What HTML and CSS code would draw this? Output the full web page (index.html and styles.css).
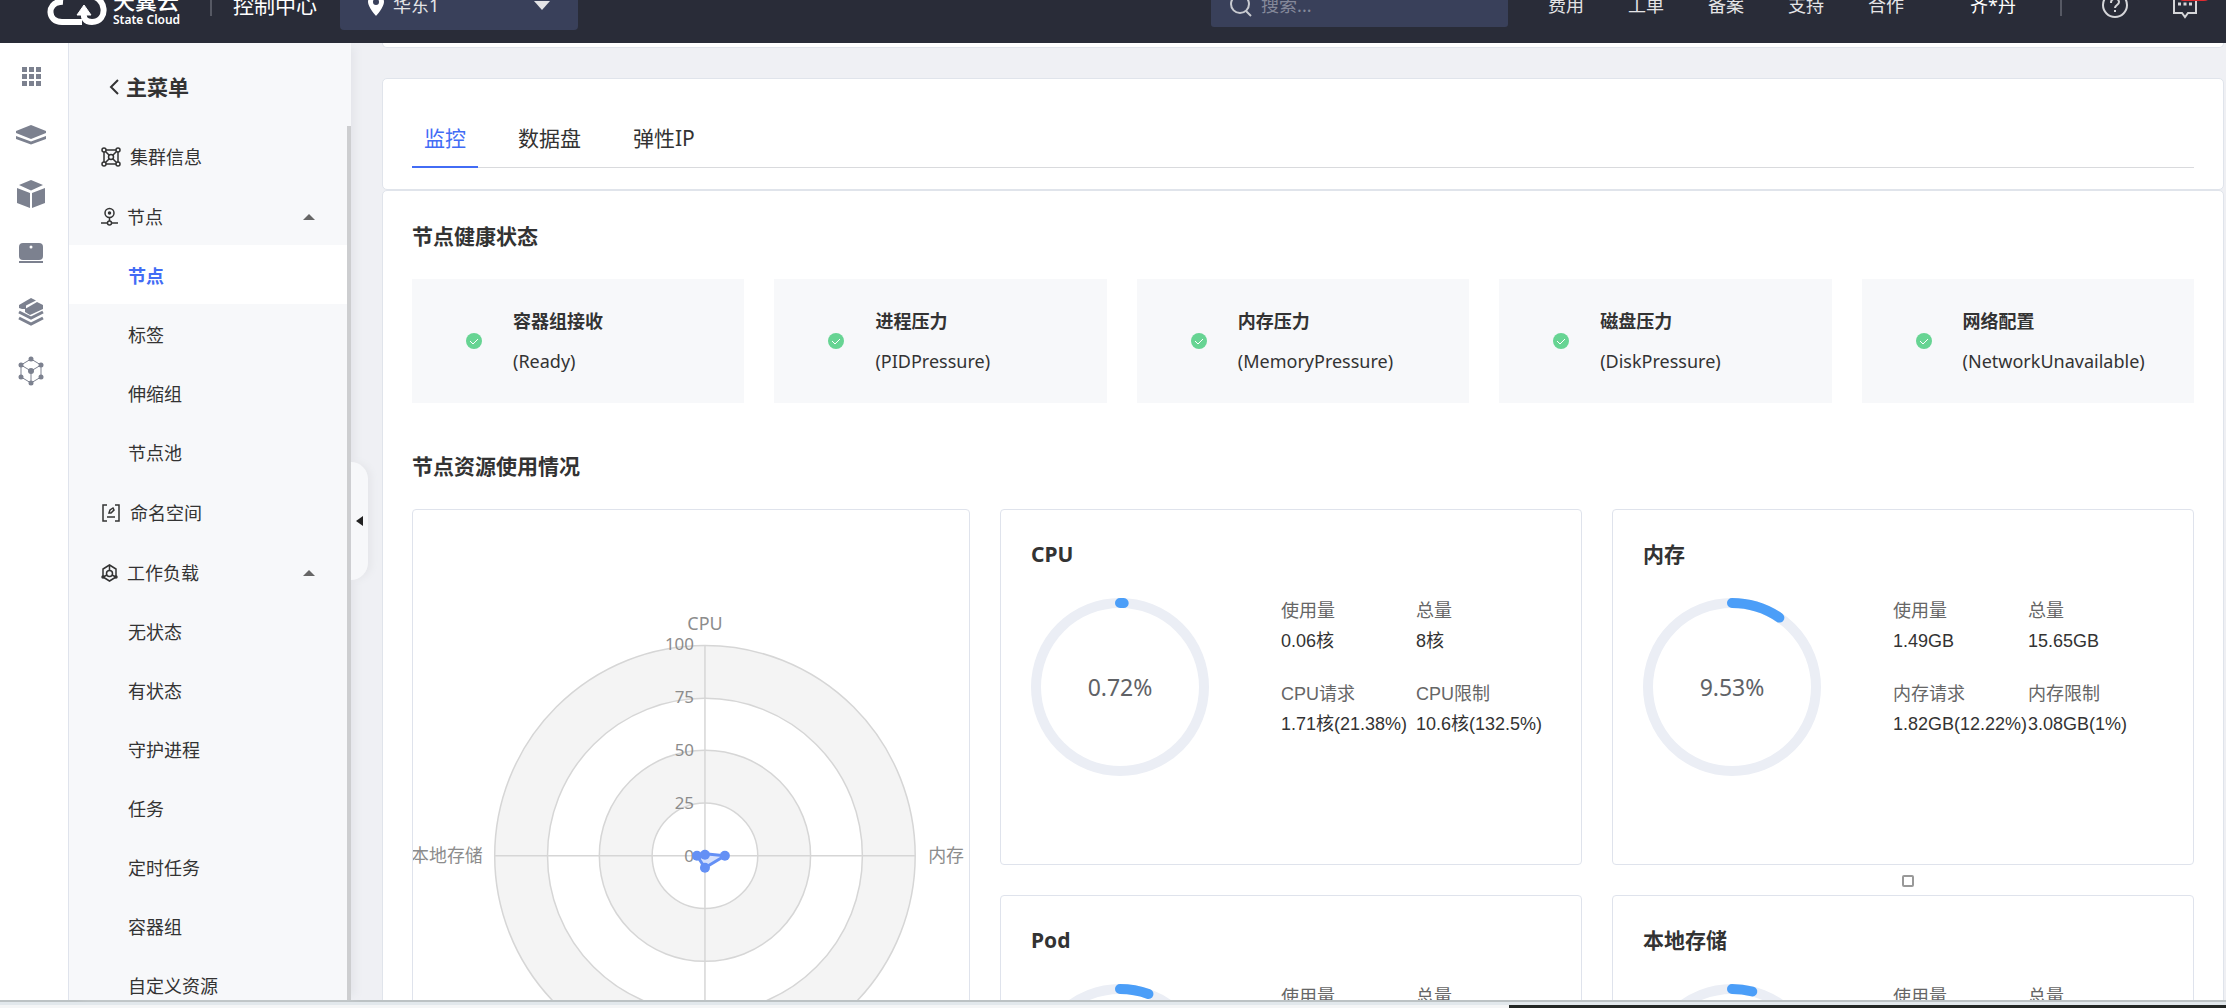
FILE: index.html
```html
<!DOCTYPE html>
<html lang="zh-CN">
<head>
<meta charset="utf-8">
<title>控制中心</title>
<link rel="stylesheet" href="styles.css">
</head>
<body>
<div class="app">
  <header class="topbar">
    <div class="topbar-inner">
      <a class="logo" href="#">
        <svg class="logo-mark" viewBox="0 0 60 50" fill="none" stroke="#fff" stroke-width="6"><path d="M35 42H15C0 42 0 23 13 22C14 4 36 2 41 16C60 15 62 42 45 42C38 42 36 38 37 32"/><path d="M37 25L30 35H44Z" fill="#fff" stroke-width="1"/></svg>
        <span class="logo-text"><strong>天翼云</strong><small>State Cloud</small></span>
      </a>
      <span class="divider"></span>
      <a class="console" href="#">控制中心</a>
      <button class="region" type="button">
        <svg width="16" height="22" viewBox="0 0 16 22"><path d="M8 0a8 8 0 0 0-8 8c0 5 8 14 8 14s8-9 8-14a8 8 0 0 0-8-8Zm0 11a3 3 0 1 1 0-6 3 3 0 0 1 0 6Z" fill="#fff" fill-rule="evenodd"/></svg>
        <span>华东1</span>
        <svg class="region-arrow" width="16" height="9" viewBox="0 0 16 9"><path d="M0 0h16L8 9Z" fill="#e4e4e6"/></svg>
      </button>
      <label class="search">
        <svg width="22" height="24" viewBox="0 0 22 24" fill="none" stroke="#c8cad0" stroke-width="2"><circle cx="10" cy="11" r="9"/><path d="M16 18l5 5"/></svg>
        <input type="text" placeholder="搜索..." aria-label="搜索">
      </label>
      <nav class="links">
        <a href="#">费用</a><a href="#">工单</a><a href="#">备案</a><a href="#">支持</a><a href="#">合作</a>
      </nav>
      <a class="user" href="#">齐*丹</a>
      <span class="divider"></span>
      <button class="icon-btn help" type="button" aria-label="帮助"><svg width="28" height="28" viewBox="0 0 28 28" fill="none" stroke="#d5d6d9" stroke-width="2"><circle cx="14" cy="14" r="12"/><path d="M10 12c0-6 8-5 8-1 0 3-4 3-4 6"/><path d="M14 19v2"/></svg></button>
      <button class="icon-btn message" type="button" aria-label="消息"><svg width="26" height="28" viewBox="0 0 26 28" fill="none" stroke="#d5d6d9" stroke-width="2"><path d="M2 3h22v19h-8l-3 4-3-4H2Z"/><path d="M6 13h3m2.500 0h3m2.500 0h3" stroke-width="3"/></svg><span class="badge"></span></button>
    </div>
  </header>

  <div class="body">
    <nav class="rail" aria-label="产品">
      <a href="#" aria-label="全部"><svg width="32" height="32" viewBox="0 0 32 32" fill="#7c818f"><path d="M7 7h5v5H7zM14 7h5v5h-5zM21 7h5v5h-5zM7 14h5v5H7zM14 14h5v5h-5zM21 14h5v5h-5zM7 21h5v5H7zM14 21h5v5h-5zM21 21h5v5h-5z"/></svg></a>
      <a href="#" aria-label="镜像"><svg width="32" height="32" viewBox="0 0 32 32" fill="#7c818f"><path d="M16 6l15 6v2l-15 6-15-6v-2Z"/><path d="M1 17l15 5.500L31 17v3l-15 5.500L1 20Z"/></svg></a>
      <a href="#" aria-label="容器"><svg width="32" height="32" viewBox="0 0 32 32" fill="#7c818f"><path d="M16 2l12 5-12 5.500L4 7ZM2 10l13 5v15L2 25ZM30 10l-13 5v15l13-5Z"/></svg></a>
      <a href="#" aria-label="主机"><svg width="32" height="32" viewBox="0 0 32 32" fill="#7c818f"><rect x="4" y="6" width="24" height="17" rx="4"/><rect x="4" y="24" width="24" height="2"/><circle cx="16" cy="10" r="1.500" fill="#fff"/></svg></a>
      <a href="#" aria-label="存储"><svg width="32" height="32" viewBox="0 0 32 32"><path d="M16 2l5 2.500-10 5V13l-4 0L4 12V9Z" fill="#7c818f"/><path d="M10 13l12-7 6 3v4l-13 6-5-3Z" fill="#7c818f"/><path d="M4 16l12 6 12-6M4 22l12 6 12-6" fill="none" stroke="#7c818f" stroke-width="3"/></svg></a>
      <a href="#" aria-label="集群"><svg width="32" height="32" viewBox="0 0 32 32" fill="#7c818f"><path d="M16 4l10 6v12l-10 6-10-6V10ZM6 10l10 6 10-6M16 16v12" fill="none" stroke="#7c818f"/><circle cx="16" cy="4" r="2.500"/><circle cx="26" cy="10" r="2.500"/><circle cx="26" cy="22" r="2.500"/><circle cx="16" cy="28" r="2.500"/><circle cx="6" cy="22" r="2.500"/><circle cx="6" cy="10" r="2.500"/><circle cx="16" cy="16" r="3"/></svg></a>
    </nav>

    <aside class="sidebar">
      <a class="side-title" href="#"><svg width="10" height="16" viewBox="0 0 10 16" fill="none" stroke="#333" stroke-width="2"><path d="M9 1L2 8l7 7"/></svg>主菜单</a>
      <ul class="menu">
        <li><a class="top" href="#"><svg width="20" height="20" viewBox="0 0 20 20" fill="none" stroke="#333" stroke-width="1.500"><path d="M4 3h12M4 17h12M3 4v12M17 4v12M4 4l12 12M16 4L4 16"/><g fill="#f7f8fa"><circle cx="3" cy="3" r="2"/><circle cx="17" cy="3" r="2"/><circle cx="3" cy="17" r="2"/><circle cx="17" cy="17" r="2"/><circle cx="10" cy="10" r="2.500"/></g></svg>集群信息</a></li>
        <li><a class="top" href="#"><svg width="17" height="20" viewBox="0 0 17 20" fill="none" stroke="#333" stroke-width="1.500"><circle cx="8.500" cy="6" r="4.500"/><circle cx="8.500" cy="6" r="1" fill="#333"/><path d="M8.500 11v3M0 16h6M11 16h6"/><circle cx="8.500" cy="16" r="2"/></svg>节点<span class="caret"></span></a></li>
        <li><a class="active" href="#">节点</a></li>
        <li><a href="#">标签</a></li>
        <li><a href="#">伸缩组</a></li>
        <li><a href="#">节点池</a></li>
        <li><a class="top" href="#"><svg width="20" height="20" viewBox="0 0 20 20" fill="none" stroke="#333" stroke-width="1.500"><path d="M6 2H2v16h4M14 2h4v16h-4M6 14h8M8 10l1-3 3-2 1 2-3 3Z"/></svg>命名空间</a></li>
        <li><a class="top" href="#"><svg width="17" height="20" viewBox="0 0 17 20" fill="none" stroke="#333" stroke-width="1.500"><path d="M8.500 2L15 6v8l-6.500 4L2 14V6Z"/><circle cx="8.500" cy="10.500" r="3"/><path d="M8.500 2v5M11 12l4 2M6 12l-4 2"/><circle cx="2" cy="14" r="1"/><circle cx="15" cy="14" r="1"/></svg>工作负载<span class="caret"></span></a></li>
        <li><a href="#">无状态</a></li>
        <li><a href="#">有状态</a></li>
        <li><a href="#">守护进程</a></li>
        <li><a href="#">任务</a></li>
        <li><a href="#">定时任务</a></li>
        <li><a href="#">容器组</a></li>
        <li><a href="#">自定义资源</a></li>
      </ul>
      <span class="scroll-thumb"></span>
      <button class="collapse" type="button" aria-label="收起菜单"></button>
    </aside>

    <main class="content">
      <div class="card card-prev"></div>
      <section class="card card-tabs">
        <div class="tabs" role="tablist">
          <button class="tab selected" type="button" role="tab" aria-selected="true">监控</button>
          <button class="tab" type="button" role="tab">数据盘</button>
          <button class="tab" type="button" role="tab">弹性IP</button>
        </div>
      </section>
      <section class="card card-main">
        <h2>节点健康状态</h2>
        <div class="health">
          <div class="status"><svg class="ok" viewBox="0 0 16 16"><circle cx="8" cy="8" r="8"/><path d="M4 8l3 3 5-5"/></svg><p><b>容器组接收</b><span>(Ready)</span></p></div>
          <div class="status"><svg class="ok" viewBox="0 0 16 16"><circle cx="8" cy="8" r="8"/><path d="M4 8l3 3 5-5"/></svg><p><b>进程压力</b><span>(PIDPressure)</span></p></div>
          <div class="status"><svg class="ok" viewBox="0 0 16 16"><circle cx="8" cy="8" r="8"/><path d="M4 8l3 3 5-5"/></svg><p><b>内存压力</b><span>(MemoryPressure)</span></p></div>
          <div class="status"><svg class="ok" viewBox="0 0 16 16"><circle cx="8" cy="8" r="8"/><path d="M4 8l3 3 5-5"/></svg><p><b>磁盘压力</b><span>(DiskPressure)</span></p></div>
          <div class="status"><svg class="ok" viewBox="0 0 16 16"><circle cx="8" cy="8" r="8"/><path d="M4 8l3 3 5-5"/></svg><p><b>网络配置</b><span>(NetworkUnavailable)</span></p></div>
        </div>

        <h2>节点资源使用情况</h2>
        <div class="usage">
          <div class="panel radar">
            <svg viewBox="0 0 558 700" role="img" aria-label="资源使用雷达图">
              <g stroke="#d6d6d6" stroke-width="1.500">
                <circle cx="293" cy="347" r="211" fill="#f4f4f4"/>
                <circle cx="293" cy="347" r="158" fill="#fff"/>
                <circle cx="293" cy="347" r="106" fill="#f4f4f4"/>
                <circle cx="293" cy="347" r="53" fill="#fff"/>
                <path d="M293 136v422M82 347h422"/>
              </g>
              <g class="axis">
                <text x="293" y="120" text-anchor="middle">CPU</text>
                <text x="517" y="353">内存</text>
                <text x="70" y="353" text-anchor="end">本地存储</text>
                <text x="293" y="586" text-anchor="middle">Pod</text>
              </g>
              <g class="ticks" text-anchor="end">
                <text x="282" y="141">100</text><text x="282" y="194">75</text><text x="282" y="247">50</text><text x="282" y="300">25</text><text x="282" y="353">0</text>
              </g>
              <path d="M293 345L313 347L293 359L285 347Z" fill="#d5e0fc" stroke="#6490f5" stroke-width="3"/>
              <g fill="#6490f5"><circle cx="293" cy="346" r="5"/><circle cx="313" cy="347" r="5"/><circle cx="293" cy="359" r="5"/><circle cx="285" cy="347" r="5"/></g>
            </svg>
          </div>

          <div class="panel">
            <h3>CPU</h3>
            <div class="meter">
              <div class="ring"><svg viewBox="0 0 178 178"><circle cx="89" cy="89" r="84"/><circle class="arc" cx="89" cy="89" r="84" pathLength="100" stroke-dasharray="0.72 100"/></svg><span>0.72%</span></div>
              <dl>
                <div><dt>使用量</dt><dd>0.06核</dd></div><div><dt>总量</dt><dd>8核</dd></div>
                <div><dt>CPU请求</dt><dd>1.71核(21.38%)</dd></div><div><dt>CPU限制</dt><dd>10.6核(132.5%)</dd></div>
              </dl>
            </div>
          </div>

          <div class="panel">
            <h3>内存</h3>
            <div class="meter">
              <div class="ring"><svg viewBox="0 0 178 178"><circle cx="89" cy="89" r="84"/><circle class="arc" cx="89" cy="89" r="84" pathLength="100" stroke-dasharray="9.53 100"/></svg><span>9.53%</span></div>
              <dl>
                <div><dt>使用量</dt><dd>1.49GB</dd></div><div><dt>总量</dt><dd>15.65GB</dd></div>
                <div><dt>内存请求</dt><dd>1.82GB(12.22%)</dd></div><div><dt>内存限制</dt><dd>3.08GB(1%)</dd></div>
              </dl>
            </div>
            <span class="handle"></span>
          </div>

          <div class="panel">
            <h3>Pod</h3>
            <div class="meter">
              <div class="ring"><svg viewBox="0 0 178 178"><circle cx="89" cy="89" r="84"/><circle class="arc" cx="89" cy="89" r="84" pathLength="100" stroke-dasharray="5.5 100"/></svg></div>
              <dl><div><dt>使用量</dt></div><div><dt>总量</dt></div></dl>
            </div>
          </div>

          <div class="panel">
            <h3>本地存储</h3>
            <div class="meter">
              <div class="ring"><svg viewBox="0 0 178 178"><circle cx="89" cy="89" r="84"/><circle class="arc" cx="89" cy="89" r="84" pathLength="100" stroke-dasharray="3.9 100"/></svg></div>
              <dl><div><dt>使用量</dt></div><div><dt>总量</dt></div></dl>
            </div>
          </div>
        </div>
      </section>
    </main>
  </div>

  <footer class="taskbar"><span class="taskbar-light"></span><span class="taskbar-dark"></span></footer>
</div>
</body>
</html>
```

FILE: styles.css
```css
* { box-sizing: border-box; }
body, h2, h3, p, ul, dl, dd { margin: 0; padding: 0; }
ul { list-style: none; }
a { color: inherit; text-decoration: none; }
button, input { font: inherit; color: inherit; border: 0; background: none; padding: 0; }
svg { display: block; flex: none; }
body {
  font: 18px/24px "Noto Sans", "Noto Sans CJK SC", sans-serif;
  color: #333;
  background: #eff0f4;
}
.app { display: flex; flex-direction: column; height: 100vh; overflow: hidden; }

/* Top bar */
.topbar { position: relative; z-index: 1; flex: none; height: 43px; overflow: hidden; background: #292c38; color: #fff; }
.topbar-inner { display: flex; align-items: center; height: 54px; margin-top: -22px; padding: 0 28px 0 47px; }
.logo { display: flex; align-items: center; gap: 6px; width: 135px; }
.logo-mark { width: 60px; height: 50px; }
.logo-text { display: flex; flex-direction: column; padding-top: 4px; }
.logo-text strong { font-size: 22px; line-height: 26px; font-weight: 500; }
.logo-text small { font-size: 12px; line-height: 14px; font-weight: 600; }
.divider { width: 2px; height: 22px; background: #565964; }
.logo + .divider { margin: 0 21px 0 28px; }
.console { font-size: 21px; }
.region { display: flex; align-items: center; gap: 9px; width: 238px; height: 50px; margin-left: 23px; padding: 0 28px; border-radius: 4px; background: #39405a; color: #e4e4e6; }
.region-arrow { margin-left: auto; }
.search { display: flex; align-items: center; gap: 9px; width: 297px; height: 44px; margin-left: auto; padding: 0 19px; border-radius: 3px; background: #39405a; }
.search input { width: 100%; outline: 0; }
.search input::placeholder { color: #85899a; opacity: 1; }
.links { display: flex; gap: 44px; margin-left: 40px; color: #e4e4e6; }
.user { margin: 0 44px 0 66px; }
.icon-btn { position: relative; }
.help { margin-left: 39px; }
.message { margin-left: 43px; }
.badge { position: absolute; left: 4px; top: -6px; width: 36px; height: 16px; border-radius: 8px; background: #e02b30; }

/* Product rail */
.body { display: flex; flex: 1; min-height: 0; }
.rail { flex: none; display: flex; flex-direction: column; gap: 27px; width: 69px; padding: 17px 20px 0 15px; background: #fff; border-right: 1px solid #dfe3ec; }

/* Side menu */
.sidebar { position: relative; flex: none; width: 282px; background: #f7f8fa; box-shadow: 8px 0 8px -4px #e4e5ea; }
.side-title { display: flex; align-items: center; gap: 7px; height: 82px; padding: 6px 0 0 40px; font-size: 21px; font-weight: 700; }
.menu { height: calc(100% - 82px); overflow: hidden; }
.menu a { display: flex; align-items: center; height: 59px; padding: 3px 36px 0 59px; }
.menu .top { gap: 9px; height: 60px; padding-left: 32px; }
.menu .active { background: #fff; color: #426cf5; font-weight: 700; }
.caret { margin-left: auto; border: 6px solid transparent; border-top: 0; border-bottom-color: #666; }
.scroll-thumb { position: absolute; right: 0; top: 83px; bottom: 0; width: 4px; background: #cdced0; }
.collapse { position: absolute; left: 100%; top: 419px; width: 17px; height: 118px; border-radius: 0 17px 17px 0; background: #f7f8fa; box-shadow: 4px 0 6px #e6e7eb; }
.collapse::before { content: ""; display: block; width: 0; margin-left: 5px; border: 5px solid transparent; border-left: 0; border-right: 7px solid #222; }

/* Content cards */
.content { flex: 1; min-width: 0; overflow: hidden; padding: 0 2px 0 31px; }
.card { background: #fff; border: 1px solid #e0e4eb; border-radius: 5px; }
.card-prev { height: 5px; border-top: 0; border-radius: 0 0 5px 5px; margin-bottom: 30px; }
.card-tabs { height: 112px; padding: 34px 29px 0; }
.tabs { display: flex; gap: 28px; border-bottom: 1px solid #d9dadd; }
.tab { height: 55px; margin-bottom: -1px; padding: 0 12px 4px; font-size: 21px; line-height: 28px; border-bottom: 2px solid transparent; cursor: pointer; }
.tab.selected { color: #426cf5; border-bottom-color: #426cf5; }
.card-main { padding: 30px 29px; }
h2 { font-size: 21px; line-height: 30px; }
.health { display: grid; grid-template-columns: repeat(5, 1fr); gap: 30px; margin: 28px 0 48px; }
.status { display: flex; align-items: center; gap: 31px; height: 124px; padding-left: 54px; background: #f7f8fa; }
.ok { width: 16px; height: 16px; fill: #67d493; }
.ok path { fill: none; stroke: #fff; }
.status p { display: flex; flex-direction: column; gap: 16px; }

.usage { display: grid; grid-template-columns: 560fr 582fr 581fr; grid-auto-rows: 356px; gap: 30px; margin-top: 28px; }
.panel { position: relative; padding: 30px; border: 1px solid #dfe3ec; border-radius: 4px; }
.radar { grid-row: span 2; padding: 0; overflow: hidden; }
.radar svg { width: 100%; }
.axis, .ticks { fill: #8c8c8c; }
.axis { font-size: 18px; }
.ticks { font-size: 17px; }
h3 { font-size: 21px; line-height: 28px; }
.meter { display: flex; gap: 72px; margin-top: 30px; }
.ring { position: relative; flex: none; width: 178px; height: 178px; }
.ring circle { fill: none; stroke: #ebeef5; stroke-width: 10px; }
.ring .arc { stroke: #4b9ef8; stroke-linecap: round; transform: rotate(-90deg); transform-origin: center; }
.ring span { position: absolute; inset: 0; display: grid; place-items: center; font-size: 23px; color: #606266; }
dl { display: grid; grid-template-columns: 135px 135px; align-content: start; row-gap: 23px; margin-top: -2px; font-family: "Liberation Sans", "Noto Sans CJK SC", sans-serif; line-height: 30px; white-space: nowrap; }
dt { color: #666; }
.handle { position: absolute; left: 289px; top: 365px; width: 12px; height: 12px; border: 2px solid #999; border-radius: 2px; }

/* Edge of the window below the page */
.taskbar { flex: none; display: flex; align-items: flex-end; height: 8px; border-top: 2px solid #bcc2c4; background: #e2e8ec; }
.taskbar-light { flex: 1509; height: 3px; background: #f4f5f6; }
.taskbar-dark { flex: 717; height: 3px; background: #222624; }
```
